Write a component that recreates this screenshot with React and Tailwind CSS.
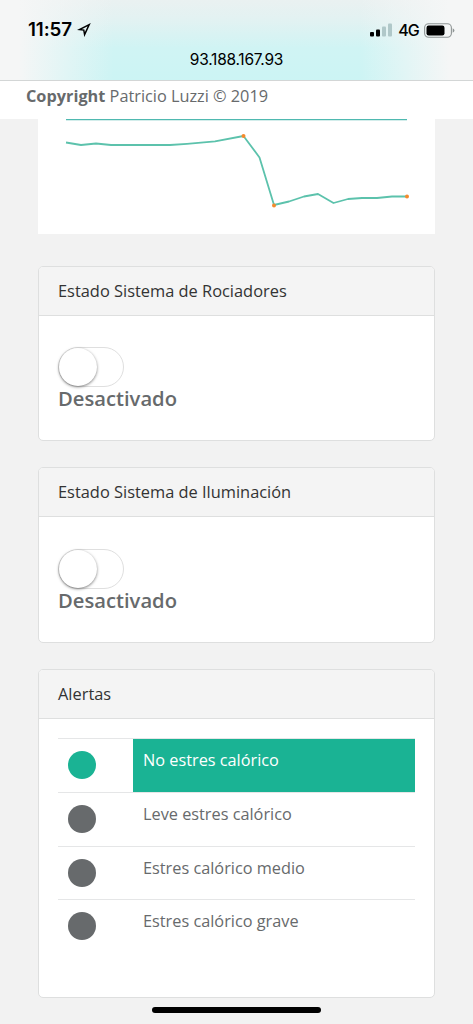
import { clsx } from 'clsx'

const ALERTS = [
  { label: 'No estres calórico', active: true },
  { label: 'Leve estres calórico', active: false },
  { label: 'Estres calórico medio', active: false },
  { label: 'Estres calórico grave', active: false },
]

const LINE = '66,23.5 81,26 96,24.5 111,26 170,26 187,24.8 215,22.3 243.5,17 259.5,38.5 274,86 289,82.5 304,77.5 318,75 333.5,84 348,80 362,79 377,79 392,77.5 407,77.5'
const SPOTS = [[243.5, 17], [274, 86.5], [407, 77.5]]

function StatusBar() {
  return (
    <header className="h-[81px] shrink-0 border-b border-[#d3d6d6] bg-[#f5f6f6] bg-[linear-gradient(to_right,#f5f6f6_4%,#f5f6f600_24%,#f5f6f600_76%,#f5f6f6_95%),linear-gradient(to_bottom,#eaf1f1_0%,#e2f2f2_25%,#d0f4f4_60%,#ccf4f4_100%)] font-[Inter,sans-serif] text-black">
      <div className="flex h-[49px] items-end justify-between pr-[18px] pl-[28px]">
        <div className="flex items-center pb-[8px]">
          <span className="text-[18.8px] leading-[22px] font-semibold tracking-[-0.1px]">11:57</span>
          <svg width="14" height="14" viewBox="0 0 14 14" className="ml-[5px]" fill="none" stroke="black" strokeWidth="1.5" strokeLinejoin="miter">
            <path d="M12.2 1.6 2.4 6.6 6.8 7.1 7.6 11.6Z" />
          </svg>
        </div>
        <div className="flex items-center pb-[7px]">
          <svg width="22" height="14" viewBox="0 0 22 14">
            <rect x="0" y="9" width="4" height="4.5" rx="1" />
            <rect x="6" y="6.5" width="4" height="7" rx="1" />
            <rect x="12" y="3.5" width="4" height="10" rx="1" fill="#b0c8c9" />
            <rect x="18" y="0.5" width="4" height="13" rx="1" fill="#b0c8c9" />
          </svg>
          <span className="ml-[6px] text-[16px] leading-6 font-medium tracking-[-0.8px]">4G</span>
          <svg width="31" height="15" viewBox="0 0 31 15" className="ml-[5px]">
            <rect x="0.6" y="0.7" width="26.8" height="13.6" rx="4" fill="none" stroke="#8f9595" strokeWidth="1.1" />
            <rect x="2.5" y="2.6" width="18" height="9.8" rx="2.2" />
            <path d="M28.7 5.2q1.7.8 1.7 2.3t-1.7 2.3z" fill="#8f9595" />
          </svg>
        </div>
      </div>
      <p className="text-center text-[15.5px] leading-[22px] tracking-[-0.25px]">93.188.167.93</p>
    </header>
  )
}

function Card({ title, className, children }) {
  return (
    <section className={clsx('overflow-hidden rounded-[5px] border border-[#dedfdf] bg-white', className)}>
      <h2 className="h-[49px] border-b border-[#dedfdf] bg-[#f4f4f4] pl-[19px] text-[16.4px] leading-[48px] text-[#333333]">{title}</h2>
      {children}
    </section>
  )
}

function SwitchCard({ title, className }) {
  return (
    <Card title={title} className={clsx('h-[175.5px]', className)}>
      <div className="px-[19px] pt-[31.5px]">
        <button className="block h-[40px] w-[66px] rounded-full border border-[#dfdfdf] bg-white">
          <span className="block size-[38px] rounded-full bg-white shadow-[0_1px_3px_rgba(0,0,0,0.5)]" />
        </button>
        <p className="text-[20.2px] leading-[23px] font-[580] text-[#676a6c]">Desactivado</p>
      </div>
    </Card>
  )
}

export default function App() {
  return (
    <div className="flex h-[1024px] w-[473px] flex-col overflow-hidden bg-[#f2f2f2] font-['Open_Sans',sans-serif] text-[#676a6c]">
      <StatusBar />
      <footer className="h-[38px] shrink-0 bg-white pl-[26px] text-[16.3px] leading-[30px]">
        <strong className="font-bold">Copyright</strong> Patricio Luzzi © 2019
      </footer>

      <main className="px-[38px]">
        {/* Sparkline */}
        <div className="h-[115px] bg-white">
          <svg width="397" height="115" viewBox="38 0 397 115" fill="none">
            <path d="M66 0.5H407" stroke="#4fb9b0" strokeWidth="1.3" />
            <polyline points={LINE} stroke="#5cc2ac" strokeWidth="1.8" strokeLinejoin="round" />
            {SPOTS.map(([x, y]) => <circle key={x} cx={x} cy={y} r="2" fill="#f58a2c" />)}
          </svg>
        </div>

        <SwitchCard title="Estado Sistema de Rociadores" className="mt-[31.5px]" />
        <SwitchCard title="Estado Sistema de Iluminación" className="mt-[26.2px]" />

        <Card title="Alertas" className="mt-[26.3px] h-[329px]">
          <ul className="px-[19px] pt-[19px] text-[16.3px]">
            {ALERTS.map(a => (
              <li key={a.label} className="flex h-[53.8px] border-t border-[#e5e6e7]">
                <div className="w-[75px] pt-[12px] pl-[10px]">
                  <div className={clsx('size-[28px] rounded-full', a.active ? 'bg-[#1ab394]' : 'bg-[#676a6c]')} />
                </div>
                <p className={clsx('flex-1 pt-[9px] pl-[10px] leading-[24px]', a.active && 'bg-[#1ab394] text-white')}>{a.label}</p>
              </li>
            ))}
          </ul>
        </Card>
      </main>

      {/* Home indicator */}
      <div className="mx-auto mt-[9px] h-[6px] w-[169px] shrink-0 rounded-full bg-black" />
    </div>
  )
}
